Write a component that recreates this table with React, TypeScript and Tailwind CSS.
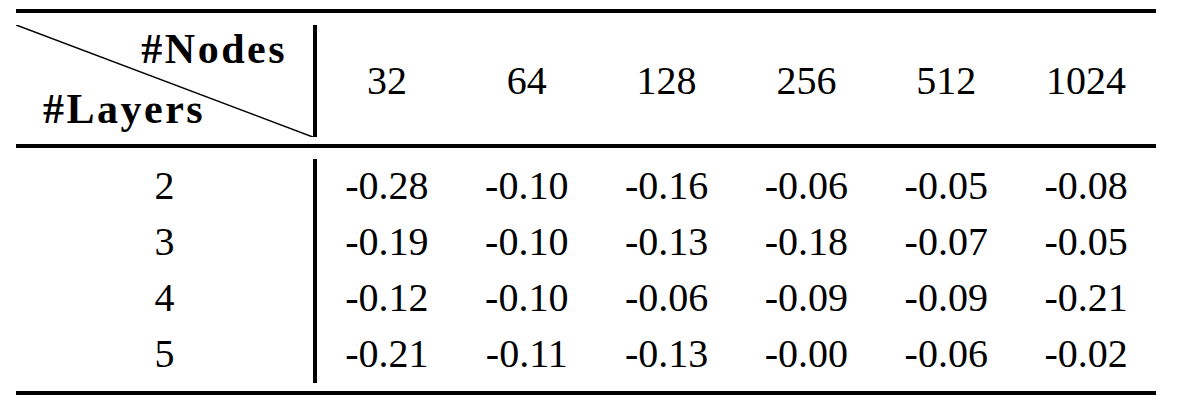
const columns = ["32", "64", "128", "256", "512", "1024"];

const rows = [
  { layers: "2", values: ["-0.28", "-0.10", "-0.16", "-0.06", "-0.05", "-0.08"] },
  { layers: "3", values: ["-0.19", "-0.10", "-0.13", "-0.18", "-0.07", "-0.05"] },
  { layers: "4", values: ["-0.12", "-0.10", "-0.06", "-0.09", "-0.09", "-0.21"] },
  { layers: "5", values: ["-0.21", "-0.11", "-0.13", "-0.00", "-0.06", "-0.02"] },
];

export default function App() {
  return (
    <main
      className="w-[1198px] h-[412px] bg-white text-black pt-[9px] pl-[16px]"
      style={{ fontFamily: '"Liberation Serif", "Times New Roman", serif' }}
    >
      <div className="w-[1140px] border-t-4 border-b-4 border-black">
        {/* header */}
        <div className="grid grid-cols-[301px_repeat(6,1fr)] h-[135px] border-b-4 border-black">
          <div className="relative mt-[12px] h-[112px] border-r-4 border-black flex flex-col pt-[3px]">
            <svg
              className="absolute inset-0"
              width="297"
              height="112"
              viewBox="0 0 297 112"
            >
              <line x1="0" y1="0" x2="297" y2="112" stroke="black" strokeWidth="1.6" />
            </svg>
            <span className="relative self-end pr-[26px] text-[42px] leading-[42px] font-bold tracking-[2.5px]">
              #Nodes
            </span>
            <span className="relative mt-[18px] pl-[27px] text-[42px] leading-[42px] font-bold tracking-[2.5px]">
              #Layers
            </span>
          </div>
          {columns.map((c) => (
            <div key={c} className="mt-[12px] h-[112px] flex items-center justify-center text-[40px] leading-[40px]">
              {c}
            </div>
          ))}
        </div>

        {/* body */}
        <div className="pt-[11px] pb-[8px]">
          {rows.map((r) => (
            <div key={r.layers} className="grid grid-cols-[301px_repeat(6,1fr)] h-[56px] text-[40px] leading-[54px]">
              <div className="border-r-4 border-black text-center">{r.layers}</div>
              {r.values.map((v, i) => (
                <div key={i} className="text-center">
                  {v}
                </div>
              ))}
            </div>
          ))}
        </div>
      </div>
    </main>
  );
}
